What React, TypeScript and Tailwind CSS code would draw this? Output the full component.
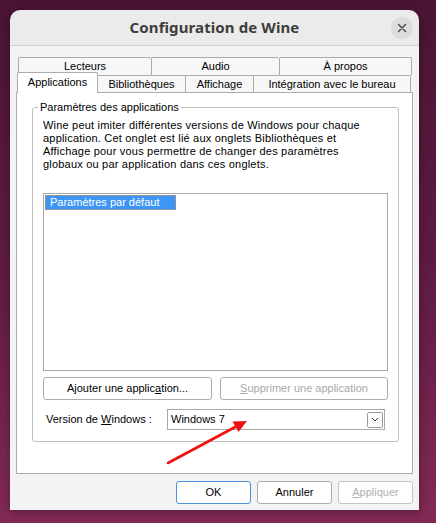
import React from "react";

const F = { fontFamily: '"Liberation Sans", Arial, sans-serif' };

function Tab({ w, label, last }: { w: string; label: string; last?: boolean }) {
  return (
    <div
      className={`${w} h-full flex items-center justify-center border-t border-l border-[#acacac] bg-[#f7f7f7] rounded-t-[2px] ${last ? "border-r" : ""}`}
    >
      {label}
    </div>
  );
}

export default function App() {
  return (
    <div
      className="relative w-[436px] h-[523px] overflow-hidden bg-gradient-to-b from-[#4a1434] via-[#5e1b42] to-[#822a55] pt-[10px] pl-[10px] text-[11px] leading-[13px] text-black"
      style={F}
    >
      <div className="w-[409px] h-[500px] flex flex-col rounded-t-[10px] shadow-[0_2px_8px_rgba(0,0,0,0.35)]">
        {/* Title bar */}
        <div className="h-[36px] grid grid-cols-[1fr_auto_1fr] items-center bg-[#ebebeb] rounded-t-[10px] border-b border-[#d2d2d2]">
          <div />
          <div
            className="text-[15px] font-bold text-[#3d3d3d] tracking-[0.1px]"
            style={{ fontFamily: '"Noto Sans", "Open Sans", sans-serif' }}
          >
            Configuration de Wine
          </div>
          <div className="flex justify-end pr-[6px]">
            <div className="w-[22px] h-[22px] rounded-full bg-[#dcdcdc] flex items-center justify-center">
              <svg width="10" height="10" viewBox="0 0 10 10">
                <path d="M1.5 1.5 L8.5 8.5 M8.5 1.5 L1.5 8.5" stroke="#444" strokeWidth="1.4" strokeLinecap="round" />
              </svg>
            </div>
          </div>
        </div>

        {/* Body */}
        <div className="flex-1 bg-[#f3f3f3] px-[6px] pt-[11px] flex flex-col">
          {/* Tabs back row */}
          <div className="flex h-[18px] pl-[2px]">
            <Tab w="w-[133px]" label="Lecteurs" />
            <Tab w="w-[128px]" label="Audio" />
            <Tab w="w-[133px]" label="À propos" last />
          </div>
          {/* Tabs front row */}
          <div className="flex items-end h-[20px] -mt-[3px] pl-[1px] relative z-10">
            <div className="w-[81px] h-[21px] -mb-[1px] flex items-start pt-[3px] justify-center border-t border-l border-r border-[#acacac] bg-white rounded-t-[2px]">
              Applications
            </div>
            <div className="w-[87px] h-[17px] flex items-center justify-center border-t border-[#acacac] bg-[#f7f7f7]">
              Bibliothèques
            </div>
            <div className="w-[68px] h-[17px] flex items-center justify-center border-t border-l border-[#acacac] bg-[#f7f7f7]">
              Affichage
            </div>
            <div className="w-[158px] h-[17px] flex items-center justify-center border-t border-l border-r border-[#acacac] bg-[#f7f7f7] rounded-tr-[2px]">
              Intégration avec le bureau
            </div>
          </div>

          {/* Panel */}
          <div className="h-[382px] border border-[#acacac] bg-white pt-[8px]">
            <fieldset className="ml-[15px] w-[367px] border border-[#bdbdbd] rounded-[3px] px-[10px] pb-[11px]">
              <legend className="ml-[-5px] px-[2px]">Paramètres des applications</legend>
              <p className="mt-[5px] w-[345px] tracking-[0.2px]">
                Wine peut imiter différentes versions de Windows pour chaque
                <br />
                application. Cet onglet est lié aux onglets Bibliothèques et
                <br />
                Affichage pour vous permettre de changer des paramètres
                <br />
                globaux ou par application dans ces onglets.
              </p>
              <div className="mt-[22px] h-[178px] border border-[#a8a8a8] bg-white p-[1px]">
                <div className="w-[131px] h-[15px] bg-[#3d95f5] text-white border border-dotted border-[#e0903a] pl-[4px] leading-[13px]">
                  Paramètres par défaut
                </div>
              </div>
              <div className="mt-[6px] flex gap-[8px]">
                <div className="w-[169px] h-[23px] border border-[#adadad] rounded-[3px] bg-white flex items-center justify-center">
                  <span>
                    Ajouter une applic<u>a</u>tion...
                  </span>
                </div>
                <div className="w-[168px] h-[23px] border border-[#adadad] rounded-[3px] bg-white flex items-center justify-center text-[#a8a8a8]">
                  <span>
                    <u>S</u>upprimer une application
                  </span>
                </div>
              </div>
              <div className="mt-[9px] flex items-center">
                <div className="w-[124px] pl-[3px]">
                  Version de <u>W</u>indows :
                </div>
                <div className="w-[218px] h-[21px] border border-[#a8a8a8] bg-white flex items-center justify-between pl-[3px] pr-[1px]">
                  <span>Windows 7</span>
                  <div className="w-[16px] h-[16px] border border-[#9a9a9a] rounded-[2px] flex items-center justify-center">
                    <svg width="8" height="5" viewBox="0 0 8 5">
                      <path d="M1 1 L4 4 L7 1" stroke="#333" strokeWidth="1" fill="none" />
                    </svg>
                  </div>
                </div>
              </div>
            </fieldset>
          </div>

          {/* Bottom buttons */}
          <div className="mt-[7px] flex justify-end gap-[6px]">
            <div className="w-[75px] h-[23px] border border-[#4a90d9] rounded-[3px] bg-white flex items-center justify-center">
              OK
            </div>
            <div className="w-[75px] h-[23px] border border-[#adadad] rounded-[3px] bg-white flex items-center justify-center">
              Annuler
            </div>
            <div className="w-[75px] h-[23px] border border-[#c4c4c4] rounded-[3px] bg-white flex items-center justify-center text-[#b0b0b0]">
              <span>
                <u>A</u>ppliquer
              </span>
            </div>
          </div>
        </div>
      </div>

      {/* Red annotation arrow */}
      <svg className="absolute left-0 top-0 pointer-events-none" width="436" height="523" viewBox="0 0 436 523">
        <line x1="168" y1="463" x2="238" y2="425.5" stroke="#f01010" strokeWidth="2.6" strokeLinecap="round" />
        <polygon points="247,421 238.5,432 232.5,421.5" fill="#f01010" />
      </svg>
    </div>
  );
}
